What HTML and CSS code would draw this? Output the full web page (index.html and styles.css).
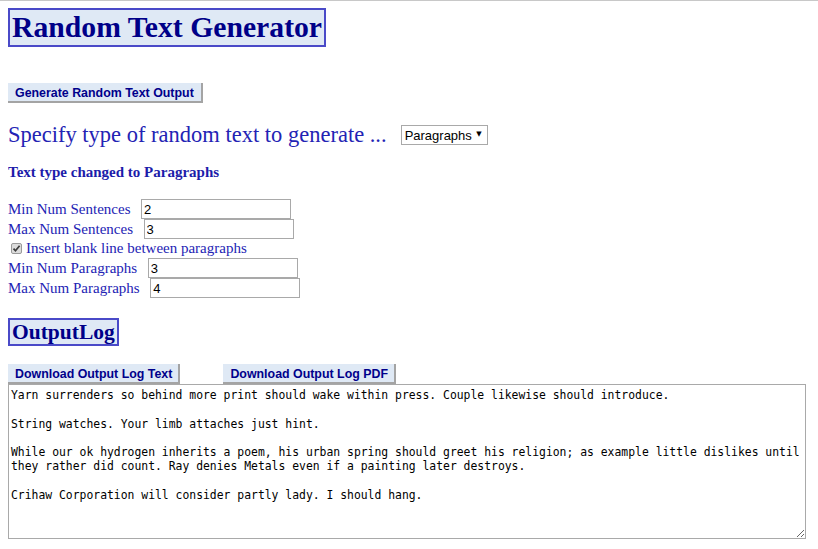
FILE: index.html
```html
<!DOCTYPE html>
<html>
<head>
<meta charset="utf-8">
<title>Random Text Generator</title>
<link rel="stylesheet" href="styles.css">
</head>
<body>
<h1 class="title">Random Text Generator</h1>
<div class="actions">
  <button class="btn">Generate Random Text Output</button>
</div>
<div class="type-row">
  <span class="type-label">Specify type of random text to generate ...</span>
  <span class="select-wrap">
    <select class="type-select">
      <option>Paragraphs</option>
      <option>Sentences</option>
      <option>Words</option>
    </select>
    <span class="select-arrow">&#9660;</span>
  </span>
</div>
<p class="status">Text type changed to Paragraphs</p>
<div class="fields">
  <div class="field"><label class="field-label">Min Num Sentences</label><input class="field-input" type="text" value="2"></div>
  <div class="field"><label class="field-label">Max Num Sentences</label><input class="field-input" type="text" value="3"></div>
  <div class="field check-row">
    <span class="check-box"><svg width="11" height="11" viewBox="0 0 11 11"><rect x="0.5" y="0.5" width="10" height="10" rx="1.5" fill="#dcdcdc" stroke="#9a9a9a"/><path d="M2.5 5.6 L4.5 7.8 L8.6 2.8" fill="none" stroke="#3c3c3c" stroke-width="1.7"/></svg></span>
    <label class="check-label">Insert blank line between paragraphs</label>
  </div>
  <div class="field"><label class="field-label">Min Num Paragraphs</label><input class="field-input" type="text" value="3"></div>
  <div class="field"><label class="field-label">Max Num Paragraphs</label><input class="field-input" type="text" value="4"></div>
</div>
<h2 class="section">OutputLog</h2>
<div class="log-actions">
  <button class="btn">Download Output Log Text</button>
  <button class="btn">Download Output Log PDF</button>
</div>
<textarea class="log" spellcheck="false">Yarn surrenders so behind more print should wake within press. Couple likewise should introduce.

String watches. Your limb attaches just hint.

While our ok hydrogen inherits a poem, his urban spring should greet his religion; as example little dislikes until they rather did count. Ray denies Metals even if a painting later destroys.

Crihaw Corporation will consider partly lady. I should hang.</textarea>
</body>
</html>
```
FILE: styles.css
```css
html {
  border-top: 1px solid #c8c8c8;
  background: #ffffff;
}
body {
  margin: 7px 8px 8px 8px;
  font-family: "Liberation Serif", "Times New Roman", serif;
  color: #2323b4;
}
.title {
  display: inline-block;
  margin: 0;
  padding: 0 2px;
  font-size: 29.7px;
  line-height: 35px;
  font-weight: bold;
  color: #000088;
  background: #dfe9f5;
  border: 2px solid #4a4ac8;
}
.actions {
  margin-top: 36px;
  display: flex;
}
.btn {
  font-family: "Liberation Sans", Arial, sans-serif;
  font-size: 12.4px;
  font-weight: bold;
  color: #00008b;
  background: #dfe9f5;
  border: none;
  border-right: 2px solid #a4a4a4;
  border-bottom: 2px solid #a4a4a4;
  padding: 2px 6px 1px 7px;
  height: 20px;
  line-height: 17px;
  cursor: pointer;
}
.actions .btn {
  padding-right: 7px;
}
.type-row {
  margin-top: 18px;
  display: flex;
  align-items: center;
  height: 28px;
}
.type-label {
  font-size: 22.5px;
}
.select-wrap {
  position: relative;
  display: inline-block;
  margin-left: 14px;
}
.type-select {
  appearance: none;
  -webkit-appearance: none;
  font-family: "Liberation Sans", Arial, sans-serif;
  font-size: 13px;
  color: #000;
  background: #fff;
  border: 1px solid #a9a9a9;
  border-radius: 0;
  height: 20px;
  width: 87px;
  padding: 0 0 0 3px;
  margin: 0;
}
.select-arrow {
  position: absolute;
  right: 6px;
  top: 5px;
  font-family: "DejaVu Sans", sans-serif;
  font-size: 7px;
  color: #000;
  pointer-events: none;
}
.status {
  margin: 13px 0 0 0;
  font-size: 15px;
  font-weight: bold;
  line-height: 20px;
  color: #1c1caa;
}
.fields {
  margin-top: 17px;
  display: flex;
  flex-direction: column;
}
.field {
  display: flex;
  align-items: center;
  height: 20px;
  font-size: 15px;
}
.field-label {
  margin-right: 10.6px;
}
.field-input {
  width: 150px;
  height: 20px;
  box-sizing: border-box;
  border: 1px solid #a9a9a9;
  padding: 1px 2px;
  margin: 0;
  font-family: "Liberation Sans", Arial, sans-serif;
  font-size: 13px;
  color: #000;
}
.check-row {
  height: 19px;
  padding-left: 3px;
}
.check-box {
  display: inline-flex;
  width: 11px;
  height: 11px;
  margin-right: 4px;
}
.section {
  display: inline-block;
  align-self: flex-start;
  margin: 20px 0 0 0;
  padding: 0 2px 0 2px;
  font-size: 21.5px;
  line-height: 24px;
  font-weight: bold;
  color: #000088;
  background: #dfe9f5;
  border: 2px solid #4a4ac8;
}
.log-actions {
  margin-top: 18px;
  display: flex;
  align-items: flex-start;
  gap: 43px;
  height: 20px;
}
.log {
  display: block;
  box-sizing: border-box;
  width: 798px;
  height: 155px;
  margin: 0;
  padding: 3px 2px;
  border: 1px solid #a9a9a9;
  font-family: "DejaVu Sans Mono", "Liberation Mono", monospace;
  font-size: 11.4px;
  line-height: 14.3px;
  color: #000;
  resize: both;
  overflow: hidden;
}
```
